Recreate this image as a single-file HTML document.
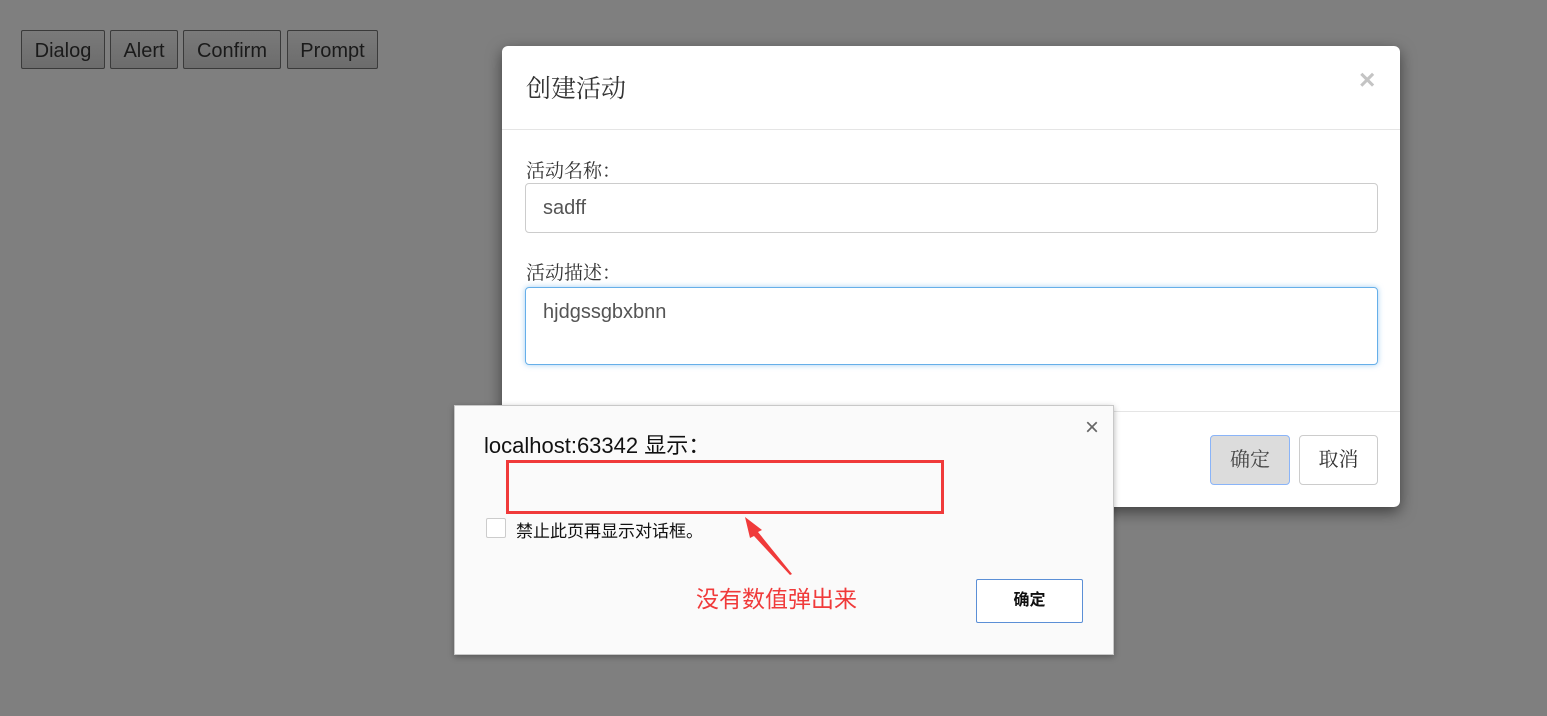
<!DOCTYPE html>
<html><head><meta charset="utf-8"><style>
*{box-sizing:border-box}
body{margin:0;width:1547px;height:716px;background:#7f7f7f;font-family:"Liberation Sans","Noto Sans CJK SC",sans-serif;position:relative;overflow:hidden}
.tb{position:absolute;top:30px;height:39px;border:1px solid #3a3a3a;border-radius:2px;background:linear-gradient(#7a7a7a,#6c6c6c);color:#1a1a1a;font-size:20px;line-height:40px;text-align:center}
.modal{position:absolute;left:502px;top:46px;width:898px;height:461px;background:#fff;border-radius:6px;box-shadow:0 5px 15px rgba(0,0,0,.5)}
.cjk{font-family:"Liberation Serif","Noto Serif CJK SC",serif}
.inp{position:absolute;left:23px;width:853px;border:1px solid #ccc;border-radius:4px;font-size:20px;color:#555;padding-left:17px}
.al{position:absolute;left:454px;top:405px;width:660px;height:250px;background:#fafafa;border:1px solid #c8c8c8;box-shadow:0 2px 6px rgba(0,0,0,.3)}
</style></head><body>
<div class="tb" style="left:21px;width:84px">Dialog</div>
<div class="tb" style="left:110px;width:68px">Alert</div>
<div class="tb" style="left:183px;width:98px">Confirm</div>
<div class="tb" style="left:287px;width:91px">Prompt</div>

<div class="modal">
 <div class="cjk" style="position:absolute;left:24px;top:23px;font-size:25px;color:#333">创建活动</div>
 <div style="position:absolute;left:857px;top:18px;font-size:28px;font-weight:bold;color:#c4c4c4">×</div>
 <div style="position:absolute;left:0;top:83px;width:100%;border-top:1px solid #e5e5e5"></div>
 <div class="cjk" style="position:absolute;left:24px;top:112px;font-size:19px;line-height:28px;color:#333">活动名称：</div>
 <div class="inp" style="top:137px;height:50px;line-height:48px">sadff</div>
 <div class="cjk" style="position:absolute;left:24px;top:214px;font-size:19px;line-height:28px;color:#333">活动描述：</div>
 <div class="inp" style="top:241px;height:78px;line-height:48px;border-color:#66afe9;box-shadow:0 0 6px rgba(102,175,233,.6)">hjdgssgbxbnn</div>
 <div style="position:absolute;left:0;top:365px;width:100%;border-top:1px solid #e5e5e5"></div>
 <div class="cjk" style="position:absolute;left:708px;top:389px;width:80px;height:50px;border:1px solid #8ab4f8;border-radius:4px;background:#dcdcdc;text-align:center;line-height:48px;font-size:20px;color:#444">确定</div>
 <div class="cjk" style="position:absolute;left:797px;top:389px;width:79px;height:50px;border:1px solid #ccc;border-radius:4px;background:#fff;text-align:center;line-height:48px;font-size:20px;color:#333">取消</div>
</div>

<div class="al">
 <div style="position:absolute;left:29px;top:22px;font-size:22px;color:#111">localhost:63342 显示：</div>
 <div style="position:absolute;right:14px;top:8px;font-size:24px;color:#666">×</div>
 <div style="position:absolute;left:51px;top:54px;width:438px;height:54px;border:3px solid #f03a3a"></div>
 <div style="position:absolute;left:31px;top:112px;width:20px;height:20px;border:1px solid #ccc;border-radius:2px;background:#fff"></div>
 <div style="position:absolute;left:61px;top:111px;font-size:17px;color:#111">禁止此页再显示对话框。</div>
 <svg style="position:absolute;left:285px;top:108px" width="60" height="65"><polygon points="5,3 22,16 18,18 52,60 50,61 14,22 10,24" fill="#f03a3a"/></svg>
 <div style="position:absolute;left:241px;top:174px;font-size:23px;color:#f03a3a">没有数值弹出来</div>
 <div style="position:absolute;left:521px;top:173px;width:107px;height:44px;border:1px solid #5b8fd6;border-radius:2px;background:#fff;text-align:center;line-height:42px;font-size:16px;font-weight:bold;color:#111">确定</div>
</div>
</body></html>
